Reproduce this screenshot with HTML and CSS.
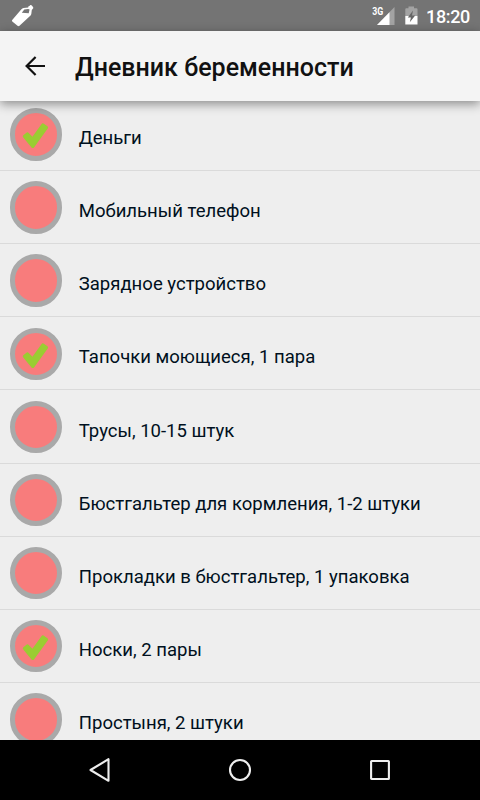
FILE: index.html
```html
<!DOCTYPE html>
<html lang="ru">
<head>
<meta charset="utf-8">
<title>Дневник беременности</title>
<link rel="stylesheet" href="styles.css">
</head>
<body>
<svg width="0" height="0" class="defs">
  <symbol id="check" viewBox="0 0 52 52"><path d="M13.3 27.2L16.8 24.4Q17.5 24 18.2 24.6L22.4 28.8L31.8 15.8Q32.6 14.9 33.6 15.6L37.7 18.4Q38.6 19.2 37.9 20.2L24 39.4Q22.8 40.7 21.5 39.4L13.1 29.2Q12.3 28 13.3 27.2Z" fill="#9acd32"/></symbol>
</svg>
<div class="screen">
  <div class="status">
    <svg class="bottle" width="26" height="26" viewBox="0 0 26 26"><path fill="#fff" fill-rule="evenodd" d="M4.2 16.9L13.2 6.5Q14.2 5.2 15.6 5L20.2 4.4Q20.2 3 21.4 3L22.4 2Q23.4 1.7 24 2.7L25.2 4.2Q25.6 5.3 24.6 6L23.8 6.9L23.3 11Q23.1 12 22.3 12.8L11.5 22.8Q10.5 23.6 9.5 22.8L4.3 18.4Q3.6 17.7 4.2 16.9ZM13.8 9.7L20.7 10.2L21.6 6.6L20.1 6.1L16.3 6.5Z"/></svg>
    <svg class="signal" width="24" height="22" viewBox="0 0 24 22"><path d="M22.5 2V20H5Z" fill="#a3a3a3"/><path d="M17.5 7.2V20H5Z" fill="#fff"/><text x="0.3" y="10.2" textLength="11" lengthAdjust="spacingAndGlyphs">3G</text></svg>
    <svg class="battery" width="13" height="19" viewBox="0 0 13 19"><path d="M1.2 2.2H3.5V.5H9V2.2H11.5Q12.5 2.2 12.5 3.2V10H.3V3.2Q.3 2.2 1.2 2.2Z" fill="#a3a3a3"/><path d="M.3 10H12.5V18.5H.3Z" fill="#fff"/><path d="M8 4.5L2.8 11.4H5.9L4.8 16.3L10.2 9.4H7Z" fill="#666"/></svg>
    <span class="clock">18:20</span>
  </div>
  <header class="bar">
    <svg class="back" width="24" height="24" viewBox="0 0 24 24"><path d="M22 12H3.6M12.6 3L3.6 12L12.6 21" fill="none" stroke="#111" stroke-width="2.2"/></svg>
    <h1>Дневник беременности</h1>
  </header>
  <main class="list">
    <div class="row"><span class="mark"><svg><use href="#check"/></svg></span><span class="label">Деньги</span></div>
    <div class="row"><span class="mark"></span><span class="label">Мобильный телефон</span></div>
    <div class="row"><span class="mark"></span><span class="label">Зарядное устройство</span></div>
    <div class="row"><span class="mark"><svg><use href="#check"/></svg></span><span class="label">Тапочки моющиеся, 1 пара</span></div>
    <div class="row"><span class="mark"></span><span class="label">Трусы, 10-15 штук</span></div>
    <div class="row"><span class="mark"></span><span class="label">Бюстгальтер для кормления, 1-2 штуки</span></div>
    <div class="row"><span class="mark"></span><span class="label">Прокладки в бюстгальтер, 1 упаковка</span></div>
    <div class="row"><span class="mark"><svg><use href="#check"/></svg></span><span class="label">Носки, 2 пары</span></div>
    <div class="row"><span class="mark"></span><span class="label">Простыня, 2 штуки</span></div>
  </main>
  <nav class="nav">
    <svg width="24" height="26" viewBox="0 0 24 26"><path d="M20.5 2.2V23.8L2.5 13Z"/></svg>
    <svg width="24" height="26" viewBox="0 0 24 26"><circle cx="12" cy="13" r="10"/></svg>
    <svg width="24" height="26" viewBox="0 0 24 26"><rect x="3.1" y="4" width="17.8" height="18" rx=".5"/></svg>
  </nav>
</div>
</body>
</html>
```
FILE: styles.css
```css
* { box-sizing: border-box; }
body { margin: 0; font-family: Roboto, "Liberation Sans", sans-serif; }
.defs { display: block; position: absolute; }
.screen { width: 480px; height: 800px; display: flex; flex-direction: column; overflow: hidden; background: #eee; }
.status { flex: none; height: 31px; background: #747474; display: flex; align-items: flex-start; padding-left: 8px; color: #fff; }
.bottle { margin-top: 3px; }
.signal { margin: 5px 0 0 338px; }
.signal text { font: 700 10px Roboto, sans-serif; fill: #fff; }
.battery { margin: 6px 0 0 9px; }
.clock { margin: 6px 0 0 8px; font-size: 18px; line-height: 22px; font-weight: 500; letter-spacing: -.35px; }
.bar { flex: none; height: 70px; display: flex; align-items: center; padding: 0 0 0 23px; background: #f4f4f4; box-shadow: 0 3px 10px rgba(0, 0, 0, .42); z-index: 1; }
.bar h1 { margin: 4px 0 0 28px; font-size: 25px; line-height: 30px; font-weight: 500; color: #111; white-space: nowrap; }
.back { display: block; }
.list { flex: 1; min-height: 0; overflow: hidden; display: flex; flex-direction: column; margin-top: -3.2px; }
.row { flex: none; height: 73.15px; display: flex; align-items: flex-start; padding: 10.3px 0 0 10px; border-bottom: 1px solid #dadada; }
.mark { width: 52.4px; height: 52.4px; border-radius: 50%; border: 5px solid #a9a9a9; background: #f87c7c; }
.mark svg { display: block; width: 52px; height: 52px; margin: -5px; }
.label { margin: 17.9px 0 0 16.4px; font-size: 18.55px; line-height: 24px; color: #001020; white-space: nowrap; }
.nav { flex: none; height: 60px; background: #000; display: flex; align-items: center; justify-content: center; gap: 116px; z-index: 1; }
.nav path, .nav circle, .nav rect { fill: none; stroke: #eee; stroke-width: 2.1; stroke-linejoin: round; }
```
